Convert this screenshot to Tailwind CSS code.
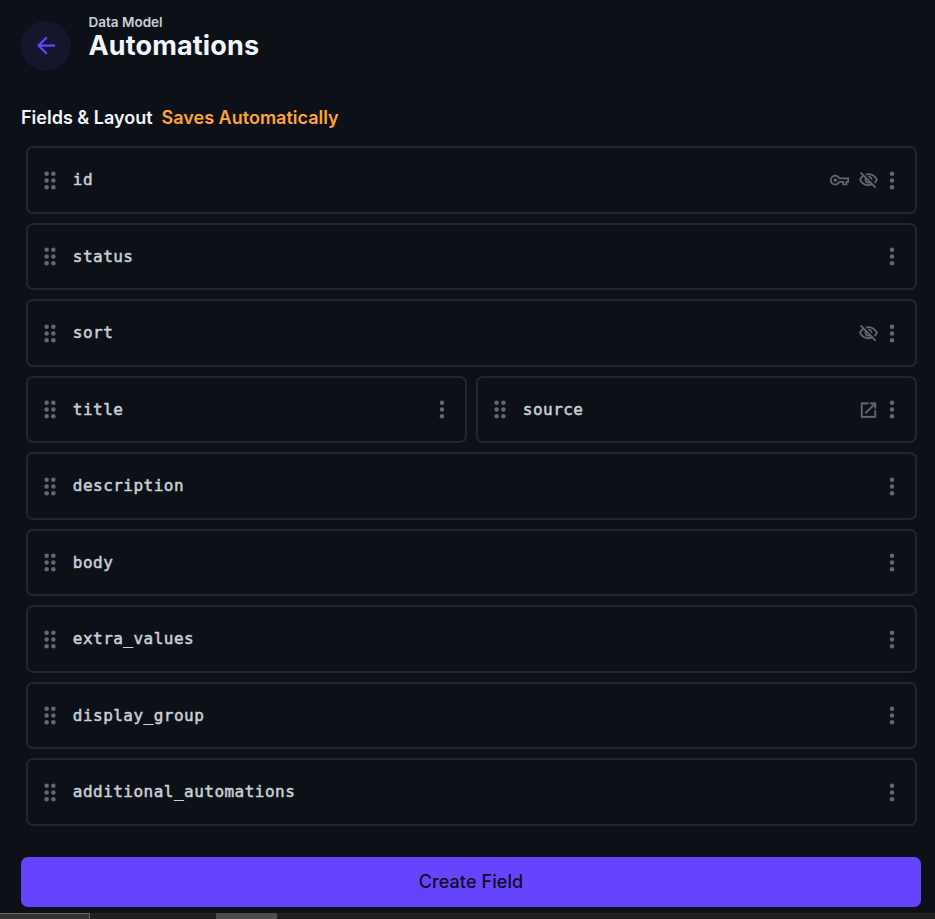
<!DOCTYPE html>
<html lang="en">
<head>
<meta charset="utf-8">
<title>Data Model - Automations</title>
<script src="https://cdn.jsdelivr.net/npm/@tailwindcss/browser@4"></script>
</head>
<body class="h-[919px] overflow-hidden bg-[#0d1017] font-['Inter',sans-serif] flex flex-col">
<svg class="hidden">
  <symbol id="drag" viewBox="0 0 24 24"><circle cx="9" cy="6" r="2"/><circle cx="15" cy="6" r="2"/><circle cx="9" cy="12" r="2"/><circle cx="15" cy="12" r="2"/><circle cx="9" cy="18" r="2"/><circle cx="15" cy="18" r="2"/></symbol>
  <symbol id="more" viewBox="0 0 24 24"><circle cx="12" cy="6" r="2"/><circle cx="12" cy="12" r="2"/><circle cx="12" cy="18" r="2"/></symbol>
  <symbol id="key" viewBox="0 0 24 24"><path fill="none" stroke="currentColor" stroke-width="2" d="M11.7 10H22.3v4h-2v3h-4v-3h-4.6A5.2 5.2 0 1 1 11.7 10z"/><circle cx="7" cy="12" r="2"/></symbol>
  <symbol id="hidden" viewBox="0 0 24 24"><path stroke="currentColor" stroke-width=".3" d="M12 6c3.79 0 7.17 2.13 8.82 5.5-.59 1.22-1.42 2.27-2.41 3.12l1.41 1.41c1.39-1.23 2.49-2.77 3.18-4.53C21.27 7.11 17 4 12 4c-1.27 0-2.49.2-3.64.57l1.65 1.65C10.66 6.09 11.32 6 12 6zm-1.07 1.14L13 9.21c.57.25 1.03.71 1.28 1.28l2.07 2.07c.08-.34.14-.7.14-1.07C16.5 9.01 14.48 7 12 7c-.37 0-.72.05-1.07.14zM2.01 3.87l2.68 2.68C3.06 7.83 1.77 9.53 1 11.5 2.73 15.89 7 19 12 19c1.52 0 2.98-.29 4.32-.82l3.42 3.42 1.41-1.41L3.42 2.45 2.01 3.87zm7.5 7.5l2.61 2.61c-.04.01-.08.02-.12.02-1.38 0-2.5-1.12-2.5-2.5 0-.05.01-.08.01-.13zm-3.4-3.4l1.75 1.75c-.23.55-.36 1.15-.36 1.78 0 2.48 2.02 4.5 4.5 4.5.63 0 1.23-.13 1.77-.36l.98.98c-.88.24-1.8.38-2.75.38-3.79 0-7.17-2.13-8.82-5.5.7-1.43 1.72-2.61 2.93-3.53z"/></symbol>
  <symbol id="open" viewBox="0 0 24 24"><path stroke="currentColor" stroke-width=".3" d="M19 19H5V5h7V3H3v18h18v-9h-2v7zM14 3v2h3.59l-9.83 9.83 1.41 1.41L19 6.41V10h2V3h-7z"/></symbol>
</svg>
<header class="flex items-start pl-[21px] pt-[12px] h-[105px] shrink-0">
  <button class="mt-[8.5px] size-[50px] rounded-full bg-[#16152e] flex items-center justify-center text-[#6644ff]">
    <svg class="w-[28px] h-[27px]" viewBox="0 0 24 24" fill="currentColor"><path d="M20 11H7.83l5.59-5.59L12 4l-8 8 8 8 1.41-1.41L7.83 13H20v-2z"/></svg>
  </button>
  <div class="ml-[17.5px]">
    <div class="text-[13.5px] leading-[20px] font-semibold text-[#c9d1d9]">Data Model</div>
    <h1 class="text-[27px] leading-[27px] font-bold tracking-[0.14px] text-[#f0f6fc]">Automations</h1>
  </div>
</header>
<h2 class="flex gap-[9px] pl-[21px] h-[41px] shrink-0 text-[18px] leading-[26px] font-semibold text-[#f0f6fc]"><span>Fields &amp; Layout</span><span class="text-[#ffa439]">Saves Automatically</span></h2>
<main id="fields" class="grid grid-cols-2 gap-[9px] pl-[26px] pr-[18px] shrink-0 auto-rows-[67.5px]"></main>
<button class="mt-[31.5px] ml-[21px] w-[900px] h-[50px] pb-[2px] shrink-0 rounded-[6.75px] bg-[#6644ff] text-[18px] font-medium tracking-[0.1px] text-[#0d1017]">Create Field</button>
<footer class="mt-auto h-[6px] shrink-0 bg-[#212121] flex">
  <div class="w-[90px] h-full bg-[#333333] border-t border-r border-[#666666]"></div>
  <div class="ml-[126px] w-[61px] h-full bg-[#4d4d4d]"></div>
</footer>
<script>
const fields = [['id', ['key', 'hidden']], ['status'], ['sort', ['hidden']], ['title', [], true], ['source', ['open'], true],
  ['description'], ['body'], ['extra_values'], ['display_group'], ['additional_automations']];
document.getElementById('fields').innerHTML = fields.map(([name, icons = [], half]) => `
  <div class="${half ? 'col-span-1' : 'col-span-2'} flex items-center rounded-[6.75px] border-2 border-[#21262e] pl-[8px] pr-[9px] pt-px text-[#666672]">
    <svg class="w-[28px] h-[27px] shrink-0" fill="currentColor"><use href="#drag"/></svg>
    <span class="ml-[8.8px] grow font-['DejaVu_Sans_Mono',monospace] text-[16px] tracking-[0.48px] leading-[24px] text-[#c9d1d9] [-webkit-text-stroke:0.5px_#c9d1d9]">${name}</span>
    ${icons.map(i => `<svg class="w-[21px] h-[20.25px] mr-[8px] shrink-0" fill="currentColor"><use href="#${i}"/></svg>`).join('')}
    <svg class="w-[28px] h-[27px] -ml-[9px] shrink-0" fill="currentColor"><use href="#more"/></svg>
  </div>`).join('');
</script>
</body>
</html>
